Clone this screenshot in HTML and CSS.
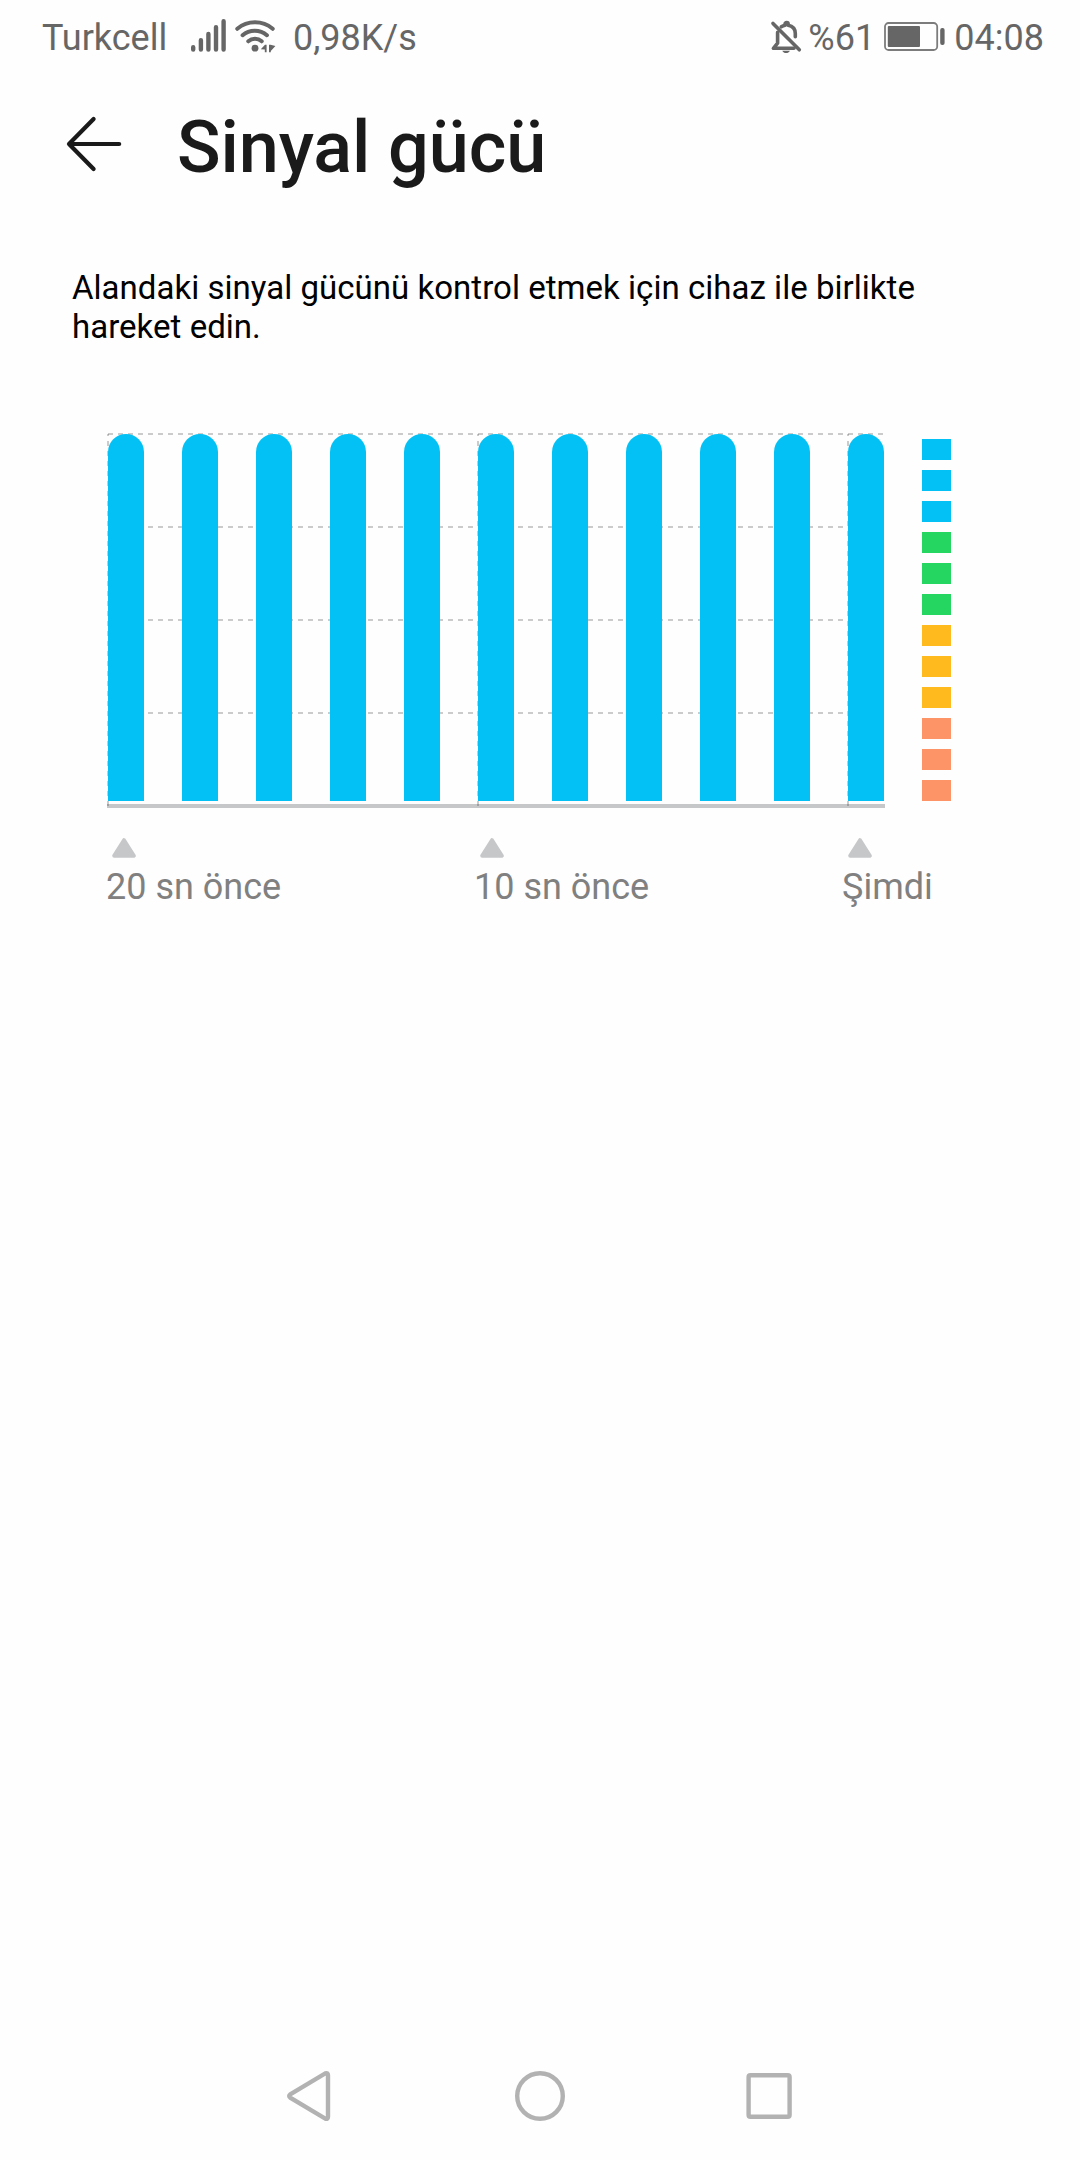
FILE: index.html
```html
<!DOCTYPE html>
<html lang="tr">
<head>
  <meta charset="UTF-8">
  <title>Sinyal gücü</title>
  <link rel="stylesheet" href="styles.css">
</head>
<body>

<div class="status-bar">
  <div class="status-left">
    <span class="carrier">Turkcell</span>
    <svg class="signal-icon" width="36" height="34" viewBox="0 0 36 34">
      <path d="M3.2 29.2v2.3M10.9 22.2v9.3M18.4 16v15.5M26 9.2v22.3M33.6 3.2v28.3"/>
    </svg>
    <svg class="wifi-icon" width="42" height="36" viewBox="0 0 42 36">
      <path d="M3.3 10.8C13.6 2.2 28.4 2.2 38.7 10.8M8.6 17.2C15.5 11.1 26 11.1 32.9 17.2M14.3 23.3C18.2 20 23.8 20 27.7 23.3"/>
      <circle cx="21" cy="30.2" r="3.4"/>
      <path class="solid" d="M26.8 31.2l4.2-4.4h1.6v7.4h-1.8v-2.6zM35 26.8h1.6l4.8 1.2-4.6 5v1.2H35z"/>
    </svg>
    <span class="speed">0,98K/s</span>
  </div>
  <div class="status-right">
    <svg class="bell-icon" width="32" height="36" viewBox="0 0 32 36">
      <path class="bell" d="M11.3 8.8C12.5 8 13.7 7.5 15 7.2V6.2a1.6 1.6 0 0 1 3.2 0v1C22.5 8 25.3 11.2 25.3 15.6v3.2M7.6 14.4v10.8L3.4 30.3H24"/>
      <path class="slash" d="M3 5.4l26.3 26.4"/>
      <path class="clapper" d="M12.3 32.7h7.6c-1.3 3.2-6.3 3.2-7.6 0z"/>
    </svg>
    <span class="percent">%61</span>
    <svg class="battery-icon" width="62" height="30" viewBox="0 0 62 30">
      <rect class="shell" x="1" y="1" width="52.2" height="27" rx="3.6"/>
      <rect class="level" x="3.8" y="4" width="32.2" height="21" rx="1"/>
      <rect class="level" x="56.2" y="6" width="4.4" height="17" rx="2"/>
    </svg>
    <span class="clock">04:08</span>
  </div>
</div>

<header class="title-bar">
  <svg class="back-icon" width="56" height="56" viewBox="0 0 56 56">
    <path d="M27.6 3L3 28l24.6 25M3 28h50.2"/>
  </svg>
  <h1>Sinyal gücü</h1>
</header>

<main class="content">
  <p class="hint">Alandaki sinyal gücünü kontrol etmek için cihaz ile birlikte hareket edin.</p>

  <div class="chart-row">
    <div class="chart">
      <svg class="grid" width="778" height="374" viewBox="0 0 778 374">
        <path d="M1 1H777M1 94H777M1 187H777M1 280H777"/>
        <path d="M1 373V1M371 373V1M741 373V1"/>
      </svg>
      <div class="bars">
        <div class="bar"></div>
        <div class="bar"></div>
        <div class="bar"></div>
        <div class="bar"></div>
        <div class="bar"></div>
        <div class="bar"></div>
        <div class="bar"></div>
        <div class="bar"></div>
        <div class="bar"></div>
        <div class="bar"></div>
        <div class="bar"></div>
      </div>
    </div>
    <div class="legend">
      <div class="level-box blue"></div>
      <div class="level-box blue"></div>
      <div class="level-box blue"></div>
      <div class="level-box green"></div>
      <div class="level-box green"></div>
      <div class="level-box green"></div>
      <div class="level-box yellow"></div>
      <div class="level-box yellow"></div>
      <div class="level-box yellow"></div>
      <div class="level-box orange"></div>
      <div class="level-box orange"></div>
      <div class="level-box orange"></div>
    </div>
  </div>

  <div class="time-axis">
    <div class="tick">
      <svg width="24" height="20" viewBox="0 0 24 20"><path d="M12 2.2L21.8 17.8H2.2z"/></svg>
      <span>20 sn önce</span>
    </div>
    <div class="tick">
      <svg width="24" height="20" viewBox="0 0 24 20"><path d="M12 2.2L21.8 17.8H2.2z"/></svg>
      <span>10 sn önce</span>
    </div>
    <div class="tick">
      <svg width="24" height="20" viewBox="0 0 24 20"><path d="M12 2.2L21.8 17.8H2.2z"/></svg>
      <span>Şimdi</span>
    </div>
  </div>
</main>

<nav class="nav-bar">
  <svg width="52" height="52" viewBox="0 0 52 52"><path d="M5.2 24.4L40.2 3.4Q43 2.4 43 5.2V46.8Q43 49.6 40.2 48.6L5.2 27.6Q3.2 26 5.2 24.4z"/></svg>
  <svg width="52" height="52" viewBox="0 0 52 52"><circle cx="26" cy="26" r="22.8"/></svg>
  <svg width="52" height="52" viewBox="0 0 52 52"><rect x="5.6" y="5.2" width="41" height="41.6" rx="1.8"/></svg>
</nav>

</body>
</html>
```

FILE: styles.css
```css
* {
  box-sizing: border-box;
}

body {
  margin: 0;
  height: 2160px;
  display: flex;
  flex-direction: column;
  background-color: #fefefe;
  font-family: Roboto, "Noto Sans", sans-serif;
  color: #000;
}

svg {
  display: block;
  flex: none;
}

/* status bar */
.status-bar {
  height: 76px;
  padding: 0 36px 0 42px;
  display: flex;
  justify-content: space-between;
  color: #666;
  font-size: 36px;
  line-height: 76px;
  white-space: nowrap;
}

.status-left,
.status-right {
  display: flex;
}

.carrier {
  width: 148px;
}

.signal-icon {
  margin-top: 18px;
  fill: none;
  stroke: #666;
  stroke-width: 4.4;
  stroke-linecap: round;
}

.wifi-icon {
  margin: 18px 17px 0 8px;
  fill: none;
  stroke: #666;
  stroke-width: 4;
  stroke-linecap: round;
}

.wifi-icon circle,
.wifi-icon .solid {
  fill: #666;
  stroke: none;
}

.bell-icon {
  margin: 18px 6px 0 0;
  fill: none;
  stroke: #666;
  stroke-width: 3.6;
  stroke-linecap: round;
  stroke-linejoin: round;
}

.bell-icon .clapper {
  fill: #666;
  stroke: none;
}

.percent {
  width: 76px;
}

.battery-icon {
  margin: 22px 8px 0 0;
}

.battery-icon .shell {
  fill: none;
  stroke: #7c7c7c;
  stroke-width: 1.8;
}

.battery-icon .level {
  fill: #666;
}

/* title */
.title-bar {
  height: 140px;
  padding: 0 66px;
  display: flex;
  align-items: flex-start;
}

.back-icon {
  margin: 40px 55px 0 0;
  fill: none;
  stroke: #1a1a1a;
  stroke-width: 4.2;
  stroke-linecap: round;
  stroke-linejoin: round;
}

h1 {
  margin: 30px 0 0;
  font-size: 72px;
  font-weight: 500;
  line-height: 84px;
  letter-spacing: -0.1px;
  color: #1a1a1a;
}

/* content */
.content {
  flex: 1;
  padding: 52px 72px 0;
}

.hint {
  margin: 0;
  font-size: 33px;
  line-height: 39px;
  letter-spacing: 0.03px;
}

.chart-row {
  margin: 87px 0 0 35px;
  display: flex;
}

.chart {
  position: relative;
  width: 778px;
  height: 375px;
  border-bottom: 4px solid #c6c7c9;
}

.grid {
  position: absolute;
  left: 0;
  top: 0;
  fill: none;
  stroke: #000;
  stroke-opacity: 0.2;
  stroke-width: 2;
  stroke-dasharray: 5 5;
}

.bars {
  position: relative;
  display: flex;
  gap: 38px;
  padding: 1px 0 0 1px;
}

.bar {
  width: 36px;
  height: 367px;
  background-color: #03c1f4;
  border-radius: 18px 18px 0 0;
}

.legend {
  margin: 6px 0 0 37px;
  display: flex;
  flex-direction: column;
  gap: 10px;
}

.level-box {
  width: 29px;
  height: 21px;
}

.blue {
  background-color: #03c1f4;
}

.green {
  background-color: #25d660;
}

.yellow {
  background-color: #ffbb1d;
}

.orange {
  background-color: #fc9467;
}

.time-axis {
  margin: 30px 0 0 34px;
  display: flex;
}

.tick {
  width: 368px;
  flex: none;
  font-size: 36px;
  line-height: 42px;
  color: #808080;
}

.tick:last-child {
  width: auto;
}

.tick svg {
  margin: 0 0 8px 6px;
  fill: #c6c7c9;
  stroke: #c6c7c9;
  stroke-width: 4;
  stroke-linejoin: round;
}

/* navigation */
.nav-bar {
  height: 90px;
  padding: 0 285px;
  display: flex;
  justify-content: space-between;
}

.nav-bar svg {
  fill: none;
  stroke: #b2b2b2;
  stroke-width: 4.4;
}
```
